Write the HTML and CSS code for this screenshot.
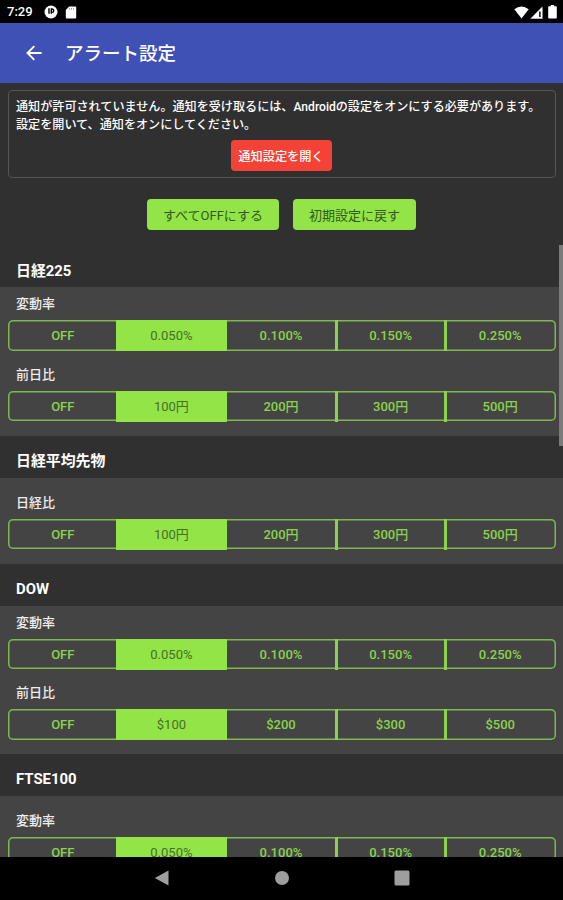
FILE: index.html
```html
<!DOCTYPE html>
<html lang="ja">
<head>
<meta charset="UTF-8" />
<meta name="viewport" content="width=device-width, initial-scale=1" />
<title>アラート設定</title>
<link rel="stylesheet" href="styles.css">
</head>
<body>
  <div class="device">
    <div class="status-bar">
      <span class="clock">7:29</span>
      <svg class="status-app" viewBox="0 0 14 14" width="14" height="14" aria-hidden="true">
        <circle cx="7" cy="7" r="6.5" fill="#fff"/>
        <path d="M5 3.200v5.600M7.300 8.800V4h.7a1.700 1.700 0 0 1 0 3.400" fill="none" stroke="#000" stroke-width="1.400"/>
      </svg>
      <svg class="status-sd" viewBox="0 0 12 13" width="12" height="13" aria-hidden="true">
        <path d="M4.2.5h6q1 0 1 1v10q0 1-1 1h-8.400q-1 0-1-1V4z" fill="#fff"/>
        <path d="M4.500 2.200v1.500M6.500 2.200v1.500M8.500 2.200v1.500" stroke="#777" stroke-width=".8"/>
      </svg>
      <div class="status-right">
        <svg viewBox="0 0 15 13" width="15" height="13" aria-hidden="true">
          <path d="M.3 3.300Q7.500-2.300 14.700 3.300L7.500 12.500z" fill="#fff"/>
        </svg>
        <svg viewBox="0 0 13 13" width="13" height="13" aria-hidden="true">
          <path d="M.3 12.700 12.500.5v12.200z" fill="#fff"/>
          <path d="M9 5.500h1.700v5.500H9z" fill="#222"/>
        </svg>
        <svg class="battery" viewBox="0 0 9 14" width="9" height="14" aria-hidden="true">
          <path d="M2.800 0h3.400v1.300H8q.8 0 .8.8v10.600q0 .8-.8.8H1q-.8 0-.8-.8V2.100q0-.8.8-.8h1.800z" fill="#fff"/>
        </svg>
      </div>
    </div>

    <header class="app-bar">
      <svg class="back" viewBox="0 0 16 16" width="16" height="16" role="img" aria-label="戻る">
        <path d="M15.600 8H1.800M8.300 1.200 1.500 8l6.800 6.800" fill="none" stroke="#fff" stroke-width="1.900"/>
      </svg>
      <h1>アラート設定</h1>
    </header>

    <main class="content">
      <div class="notice">
        <p>通知が許可されていません。通知を受け取るには、Androidの設定をオンにする必要があります。<br>設定を開いて、通知をオンにしてください。</p>
        <button class="btn btn-red">通知設定を開く</button>
      </div>

      <div class="actions">
        <button class="btn btn-green">すべてOFFにする</button>
        <button class="btn btn-green reset">初期設定に戻す</button>
      </div>

      <section>
        <h2>日経225</h2>
        <div class="card">
          <h3>変動率</h3>
          <div class="segment">
            <span>OFF</span><span class="on">0.050%</span><span>0.100%</span><span>0.150%</span><span>0.250%</span>
          </div>
          <h3>前日比</h3>
          <div class="segment">
            <span>OFF</span><span class="on">100円</span><span>200円</span><span>300円</span><span>500円</span>
          </div>
        </div>
      </section>

      <section>
        <h2>日経平均先物</h2>
        <div class="card spaced">
          <h3>日経比</h3>
          <div class="segment">
            <span>OFF</span><span class="on">100円</span><span>200円</span><span>300円</span><span>500円</span>
          </div>
        </div>
      </section>

      <section>
        <h2>DOW</h2>
        <div class="card">
          <h3>変動率</h3>
          <div class="segment">
            <span>OFF</span><span class="on">0.050%</span><span>0.100%</span><span>0.150%</span><span>0.250%</span>
          </div>
          <h3>前日比</h3>
          <div class="segment">
            <span>OFF</span><span class="on">$100</span><span>$200</span><span>$300</span><span>$500</span>
          </div>
        </div>
      </section>

      <section>
        <h2>FTSE100</h2>
        <div class="card spaced">
          <h3>変動率</h3>
          <div class="segment">
            <span>OFF</span><span class="on">0.050%</span><span>0.100%</span><span>0.150%</span><span>0.250%</span>
          </div>
        </div>
      </section>

      <div class="scroll-thumb"></div>
    </main>

    <nav class="nav-bar">
      <svg viewBox="0 0 16 16" width="16" height="16" aria-hidden="true"><path d="M.800 8 14.500.500v15z" fill="#9e9e9e"/></svg>
      <svg viewBox="0 0 16 16" width="16" height="16" aria-hidden="true"><circle cx="8" cy="8" r="7" fill="#9e9e9e"/></svg>
      <svg viewBox="0 0 16 16" width="16" height="16" aria-hidden="true"><rect x=".5" y=".5" width="15" height="15" rx="1.500" fill="#9e9e9e"/></svg>
    </nav>
  </div>
</body>
</html>
```
FILE: styles.css
```css
* {
  box-sizing: border-box;
}
body {
  margin: 0;
  background: #000;
  font-family: Roboto, "Noto Sans CJK JP", sans-serif;
}
h1, h2, h3, p {
  margin: 0;
}
svg {
  display: block;
  flex-shrink: 0;
}

.device {
  width: 563px;
  height: 900px;
  display: flex;
  flex-direction: column;
  overflow: hidden;
}

/* Status bar */
.status-bar {
  height: 23px;
  flex-shrink: 0;
  display: flex;
  align-items: center;
  padding: 1px 6px 0 7px;
  background: #000;
  color: #fff;
}
.clock {
  width: 27px;
  font-size: 13px;
  font-weight: 500;
  line-height: 16px;
}
.status-app {
  margin-left: 10px;
}
.status-sd {
  margin-left: 7px;
}
.status-right {
  margin-left: auto;
  display: flex;
  align-items: center;
  gap: 1px;
}
.battery {
  margin-left: 4px;
}

/* App bar */
.app-bar {
  height: 60px;
  flex-shrink: 0;
  display: flex;
  align-items: center;
  padding: 0 26px;
  background: #3f51b5;
  color: #fff;
}
.app-bar h1 {
  margin-left: 23px;
  padding-top: 2px;
  font-size: 18.500px;
  font-weight: 500;
  line-height: 28px;
}

/* Scrolling content */
.content {
  position: relative;
  flex: 1;
  min-height: 0;
  overflow: hidden;
  padding-top: 7px;
  background: #303030;
}
.notice {
  display: flex;
  flex-direction: column;
  align-items: center;
  height: 88px;
  margin: 0 7px 0 8px;
  padding: 8px 0 0 7px;
  border: 1px solid #555;
  border-radius: 4px;
  color: #fff;
}
.notice p {
  width: 100%;
  font-size: 12.100px;
  font-weight: 500;
  line-height: 17.500px;
  white-space: nowrap;
}
.btn {
  height: 31px;
  padding: 0;
  border: 0;
  border-radius: 4px;
  font-family: inherit;
  font-size: 12.200px;
  white-space: nowrap;
}
.btn-red {
  width: 101px;
  margin: 6px 9px 0 0;
  background: #f44336;
  color: #fff;
  font-weight: 500;
}
.actions {
  display: flex;
  justify-content: center;
  gap: 14px;
  padding-top: 21px;
}
.btn-green {
  width: 132px;
  background: #93e446;
  color: #325a1c;
  font-size: 13px;
}
.reset {
  width: 123px;
}

/* Sections */
h2 {
  height: 42px;
  padding: 4px 16px 0;
  color: #fff;
  font-size: 14.900px;
  font-weight: 700;
  line-height: 42px;
}
.actions + section h2 {
  height: 57px;
  padding-top: 20px;
}
.card {
  padding: 0 7px 14.500px 8px;
  background: #444;
}
.card.spaced {
  padding-top: 8px;
}
h3 {
  height: 33px;
  padding: 0 8px;
  color: #eee;
  font-size: 13px;
  font-weight: 500;
  line-height: 34px;
}
.segment {
  display: grid;
  grid-template-columns: repeat(5, 1fr);
  height: 30.500px;
  border-radius: 5px;
  box-shadow: inset 0 0 0 1.500px #7fb94e;
  color: #8bd34c;
  font-size: 13px;
  font-weight: 500;
  line-height: 31px;
  text-align: center;
}
.segment + h3 {
  height: 40px;
  line-height: 48px;
}
.segment span + span {
  margin-left: -2px;
  padding-right: 3px;
  border-left: 3px solid #8bd34c;
}
.segment span.on {
  border-left-color: #93e446;
  background: #93e446;
  color: #456f2a;
  font-weight: 400;
}
.segment .on + span {
  border-left-color: transparent;
}

/* Scroll position */
.scroll-thumb {
  position: absolute;
  top: 162px;
  right: 0;
  width: 4px;
  height: 201px;
  background: #7b7b7b;
}

/* System navigation */
.nav-bar {
  height: 43.500px;
  flex-shrink: 0;
  display: flex;
  align-items: center;
  justify-content: center;
  gap: 104px;
  background: #000;
}
```
